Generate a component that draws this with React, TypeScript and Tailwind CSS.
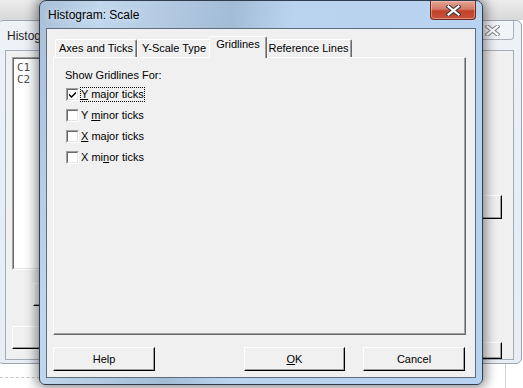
import React from "react";

const ui = "font-['Liberation_Sans',Arial,sans-serif] text-[11px] leading-[13px] text-black";

function CloseGlyph({ active }: { active: boolean }) {
  const d = "M2.5 1.5 L12.5 9.5 M12.5 1.5 L2.5 9.5";
  return (
    <svg width="15" height="11" viewBox="0 0 15 11">
      <path d={d} stroke={active ? "#3a3a3a" : "#8b9098"} strokeWidth="4.2" strokeLinecap="square" fill="none" />
      <path d={d} stroke="#ffffff" strokeWidth="2.2" strokeLinecap="square" fill="none" />
    </svg>
  );
}

function ClassicButton({ children, className = "" }: { children?: React.ReactNode; className?: string }) {
  return (
    <div
      className={`flex items-center justify-center border border-t-white border-l-white border-r-black border-b-black bg-[#f0f0f0] shadow-[inset_-1px_-1px_0_#a0a0a0] ${ui} ${className}`}
    >
      {children}
    </div>
  );
}

function Checkbox({ checked }: { checked?: boolean }) {
  return (
    <span className="block w-[13px] h-[13px] shrink-0 border border-t-[#a0a0a0] border-l-[#a0a0a0] border-r-white border-b-white">
      <span className="flex w-full h-full bg-white border border-t-[#696969] border-l-[#696969] border-r-[#e3e3e3] border-b-[#e3e3e3]">
        {checked && (
          <svg width="9" height="9" viewBox="0 0 9 9">
            <path d="M1 3.5 L3.5 6 L8 1.5 L8 3.5 L3.5 8 L1 5.5 Z" fill="#000" />
          </svg>
        )}
      </span>
    </span>
  );
}

function Tab({ label, width, active }: { label: string; width: string; active?: boolean }) {
  if (active) {
    return (
      <div
        className={`relative z-10 -mx-[2px] -mb-[1px] h-[22px] ${width} shrink-0 flex justify-center pt-[1px] bg-[#f0f0f0] border-l border-t border-r border-l-white border-t-white border-r-[#696969] shadow-[inset_-1px_0_0_#a0a0a0] rounded-t-[2px] ${ui}`}
      >
        {label}
      </div>
    );
  }
  return (
    <div
      className={`h-[18px] ${width} shrink-0 flex items-center justify-center border-l border-t border-r border-l-white border-t-white border-r-[#696969] shadow-[inset_-1px_0_0_#a0a0a0] rounded-t-[2px] ${ui}`}
    >
      {label}
    </div>
  );
}

function GridRow({ checked, focused, children }: { checked?: boolean; focused?: boolean; children: React.ReactNode }) {
  return (
    <div className="flex items-center h-[20px] gap-[1px] ml-[1px]">
      <Checkbox checked={checked} />
      <span className={`border px-[0px] ${focused ? "border-dotted border-black" : "border-transparent"} ${ui}`}>
        {children}
      </span>
    </div>
  );
}

function BackWindow() {
  return (
    <div className="absolute left-[-3px] top-[20px] w-[525px] h-[344px] flex flex-col rounded-[6px] border border-[#9aa5b1] bg-[linear-gradient(to_bottom,#eef2f7,#e4ecf5_60%,#e9eef4)] px-[7px] pb-[3px]">
      <div className="h-[29px] flex justify-between">
        <span className="self-center pl-[2px] font-['Liberation_Sans',Arial,sans-serif] text-[12px] text-[#1e1e1e]">
          Histogram - Simple
        </span>
        <div className="h-[19px] w-[43px] flex items-center justify-center rounded-b-[4px] border border-t-0 border-[#a9b2bd] bg-[#f1f4f8]">
          <CloseGlyph active={false} />
        </div>
      </div>
      <div className="flex-1 flex justify-between border border-[#a4adb8] bg-[#f0f0f0]">
        <div className="flex flex-col items-start ml-[6px] mt-[6px]">
          <div className="w-[170px] h-[213px] border border-t-[#a0a0a0] border-l-[#a0a0a0] border-r-white border-b-white">
            <div className="h-full bg-white border border-t-[#696969] border-l-[#696969] border-r-[#e3e3e3] border-b-[#e3e3e3] pl-[3px] pt-[3px] font-['DejaVu_Sans_Mono',monospace] text-[11px] leading-[12px] text-[#505050]">
              <div>C1</div>
              <div>C2</div>
            </div>
          </div>
          <ClassicButton className="ml-[21px] mt-[13px] w-[100px] h-[23px]" />
          <ClassicButton className="mt-[20px] w-[120px] h-[23px]" />
        </div>
        <div className="flex flex-col items-end mr-[11px]">
          <ClassicButton className="mt-[144px] w-[90px] h-[24px]" />
          <ClassicButton className="mt-[123px] w-[90px] h-[17px]" />
        </div>
      </div>
    </div>
  );
}

function ScaleDialog() {
  return (
    <div className="absolute left-[39px] top-0 w-[444px] h-[385px] flex flex-col rounded-t-[7px] rounded-b-[6px] border border-[#2f3d4f] bg-[linear-gradient(100deg,#a8bfd8_0%,#c2d7ed_12%,#a3bcd6_38%,#bad3ee_50%,#b7d3f1_100%)] px-[6px] pb-[6px] shadow-[0_0_12px_3px_rgba(0,0,0,0.45)]">
      {/* Title bar */}
      <div className="h-[27px] flex justify-between">
        <span className="self-center pl-[2px] font-['Liberation_Sans',Arial,sans-serif] text-[12px] text-black [text-shadow:0_0_6px_#e8f1fb]">
          Histogram: Scale
        </span>
        <div className="h-[19px] w-[46px] flex items-center justify-center rounded-b-[4px] border border-t-0 border-[#6d2a22] bg-[linear-gradient(to_bottom,#e3a596_0%,#d57a68_45%,#c2422b_55%,#c9513a_100%)] shadow-[inset_0_0_0_1px_rgba(255,210,200,0.45)]">
          <CloseGlyph active />
        </div>
      </div>

      {/* Client area */}
      <div className="flex-1 flex flex-col border border-[#5d6e83] bg-[#f0f0f0] pt-[7px] pl-[6px] pr-[9px] pb-[6px]">
        <div className="h-[21px] flex items-end pl-[2px]">
          <Tab label="Axes and Ticks" width="w-[82px]" />
          <Tab label="Y-Scale Type" width="w-[74px]" />
          <Tab label="Gridlines" width="w-[58px]" active />
          <Tab label="Reference Lines" width="w-[87px]" />
        </div>

        <div className="h-[278px] border border-t-white border-l-white border-r-[#696969] border-b-[#696969] shadow-[inset_-1px_-1px_0_#a0a0a0] pl-[11px] pt-[11px]">
          <div className={ui}>Show Gridlines For:</div>
          <div className="flex flex-col gap-[1px] mt-[2px]">
            <GridRow checked focused>
              <span className="underline underline-offset-[1px]">Y</span> major ticks
            </GridRow>
            <GridRow>
              Y <span className="underline underline-offset-[1px]">m</span>inor ticks
            </GridRow>
            <GridRow>
              <span className="underline underline-offset-[1px]">X</span> major ticks
            </GridRow>
            <GridRow>
              X mi<span className="underline underline-offset-[1px]">n</span>or ticks
            </GridRow>
          </div>
        </div>

        <div className="mt-[12px] flex mr-[1px]">
          <ClassicButton className="w-[102px] h-[24px]">Help</ClassicButton>
          <ClassicButton className="ml-auto w-[101px] h-[24px]">
            <span className="underline underline-offset-[1px]">O</span>K
          </ClassicButton>
          <ClassicButton className="ml-[18px] w-[102px] h-[24px]">Cancel</ClassicButton>
        </div>
      </div>
    </div>
  );
}

export default function App() {
  return (
    <div className="relative w-[523px] h-[388px] overflow-hidden bg-[linear-gradient(to_bottom,#ededed_0px,#d8d8d8_20px,#ffffff_20px)]">
      {/* spreadsheet behind the windows */}
      <div className="absolute left-0 top-[377px] w-[40px] border-t border-dashed border-[#c9c9c9]" />
      <div className="absolute left-[505px] top-[364px] h-[24px] border-l border-[#d4d4d4]" />
      <BackWindow />
      <ScaleDialog />
    </div>
  );
}
